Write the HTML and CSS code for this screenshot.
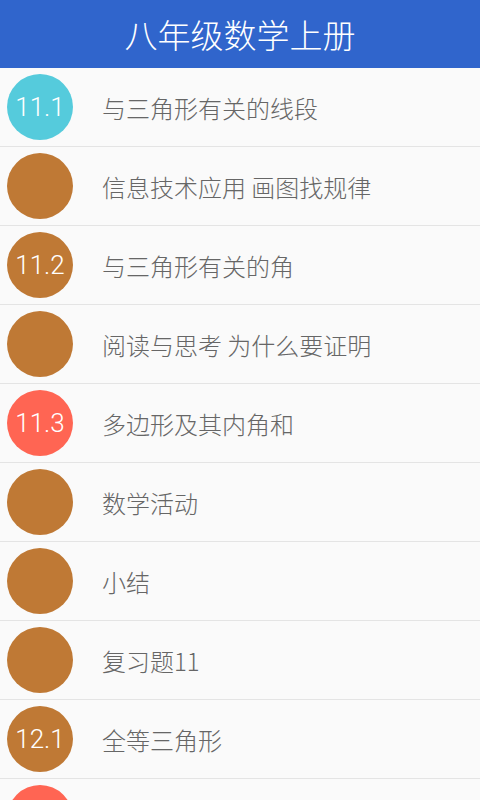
FILE: index.html
```html
<html>
<head>
    <meta name="viewport" content="width=device-width, initial-scale=1.0">
    <title>八年级数学上册</title>
    <link rel="stylesheet" href="styles.css">
</head>
<body>
<div class="header">八年级数学上册</div>
<ul class="list">
    <li class="item"><span class="badge cyan">11.1</span><span class="title">与三角形有关的线段</span></li>
    <li class="item"><span class="badge brown"></span><span class="title">信息技术应用 画图找规律</span></li>
    <li class="item"><span class="badge brown">11.2</span><span class="title">与三角形有关的角</span></li>
    <li class="item"><span class="badge brown"></span><span class="title">阅读与思考 为什么要证明</span></li>
    <li class="item"><span class="badge red">11.3</span><span class="title">多边形及其内角和</span></li>
    <li class="item"><span class="badge brown"></span><span class="title">数学活动</span></li>
    <li class="item"><span class="badge brown"></span><span class="title">小结</span></li>
    <li class="item"><span class="badge brown"></span><span class="title">复习题11</span></li>
    <li class="item"><span class="badge brown">12.1</span><span class="title">全等三角形</span></li>
    <li class="item"><span class="badge red"></span></li>
</ul>
</body>
</html>
```

FILE: styles.css
```css
/* Page */
body {
    margin: 0;
    font-family: 'Noto Sans CJK SC', 'Noto Sans', sans-serif;
    background: #fafafa;
    overflow: hidden;
}
/* Blue title bar */
.header {
    height: 68px;
    background-color: #3065cc;
    color: #fff;
    font-size: 33px;
    font-weight: 300;
    display: flex;
    justify-content: center;
    align-items: center;
}
/* Chapter list */
.list {
    list-style: none;
    margin: 0;
    padding: 0;
}
.item {
    height: 78px;
    display: flex;
    align-items: center;
    border-bottom: 1px solid #e4e4e4;
    background: #fafafa;
}
/* Round section number */
.badge {
    width: 66px;
    height: 66px;
    border-radius: 50%;
    margin-left: 7px;
    flex-shrink: 0;
    display: flex;
    justify-content: center;
    align-items: center;
    color: #fff;
    font-family: 'Roboto', sans-serif;
    font-weight: 300;
    font-size: 26px;
}
.cyan {
    background-color: #55cbdc;
}
.brown {
    background-color: #bf7935;
}
.red {
    background-color: #ff6553;
}
.title {
    margin-left: 29px;
    font-size: 24px;
    font-weight: 300;
    color: #666;
}
```
